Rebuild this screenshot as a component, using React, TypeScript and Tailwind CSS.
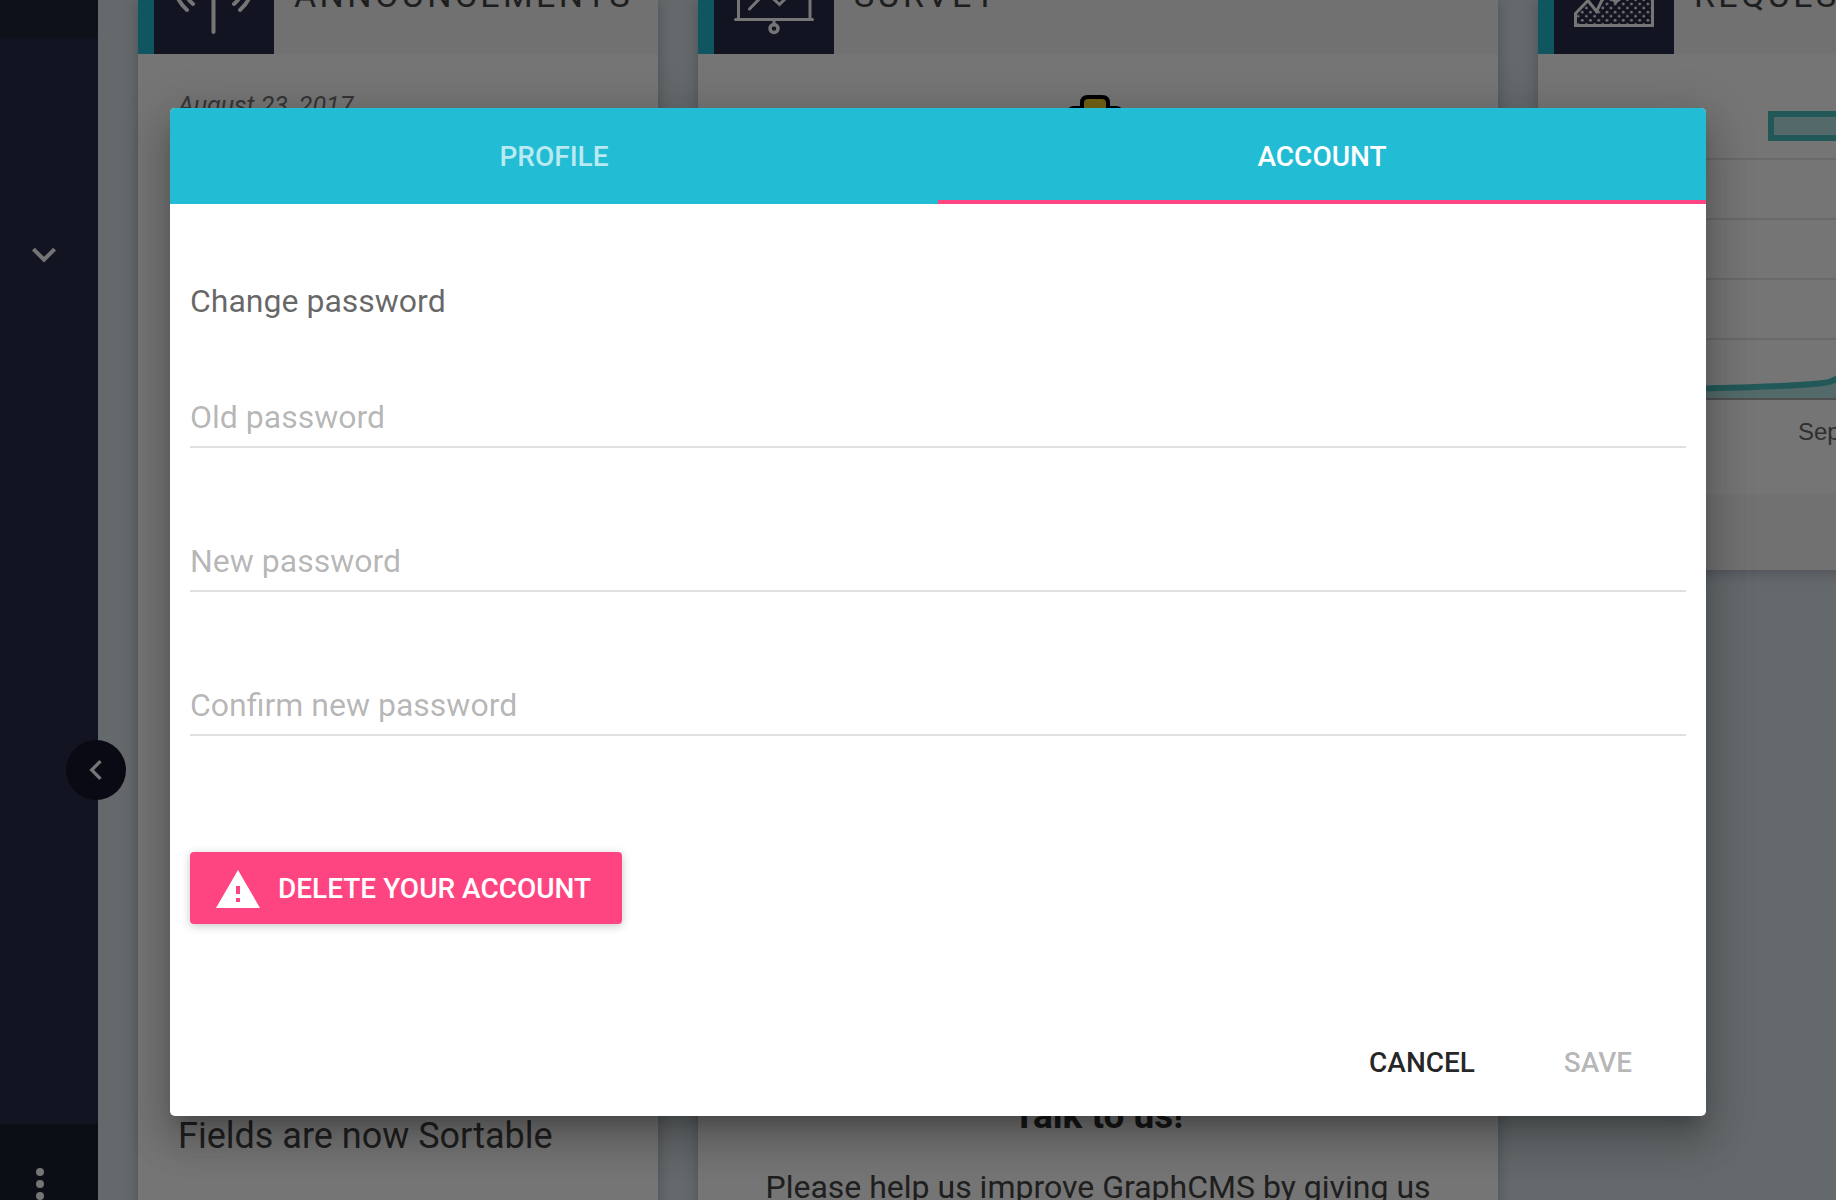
import type { ReactNode } from 'react';

function AntennaIcon() {
  return (
    <svg viewBox="0 0 120 120" className="size-[120px]" fill="none" stroke="#ffffff" strokeWidth="4" strokeLinecap="round" aria-hidden="true">
      <path d="M59.5 46v52" />
      <path d="M33 76a39.6 39.6 0 0 1 0-59" />
      <path d="M39 70a31.2 31.2 0 0 1 0-47" />
      <path d="M86 76a39.6 39.6 0 0 0 0-59" />
      <path d="M80 70a31.2 31.2 0 0 0 0-47" />
      <circle cx="59.5" cy="44" r="6" />
    </svg>
  );
}

function BoardIcon() {
  return (
    <svg viewBox="0 0 120 120" className="size-[120px]" fill="none" stroke="#ffffff" strokeWidth="3" strokeLinecap="round" aria-hidden="true">
      <path d="M24.5 30v55M96 30v55M21.5 85.5h77M60 87v4M21.5 30h77" />
      <path d="M35.5 75L52 58l13.500 12.500L85 51" />
      <circle cx="60" cy="94.5" r="4" strokeWidth="3.5" />
    </svg>
  );
}

function AreaIcon() {
  return (
    <svg viewBox="0 0 120 120" className="size-[120px]" aria-hidden="true">
      <defs>
        <pattern id="dots" x="18.1" y="76" width="8.2" height="8.2" patternUnits="userSpaceOnUse">
          <circle cx="2" cy="2" r="1.4" fill="#ffffff" />
          <circle cx="6.1" cy="6.1" r="1.4" fill="#ffffff" />
        </pattern>
      </defs>
      <path
        d="M21.5 79.5L34 66.500l8.500 11L51 60l11 8 34-30h2.500v53.500h-77z"
        fill="url(#dots)"
        stroke="#ffffff"
        strokeWidth="3"
      />
    </svg>
  );
}

type CardProps = { title: string; icon: ReactNode; width: string; children: ReactNode };

function Card({ title, icon, width, children }: CardProps) {
  return (
    <section className={`flex shrink-0 flex-col bg-white shadow-[0_2px_12px_rgba(40,50,80,0.3)] ${width}`}>
      <header className="flex h-[54px] items-end overflow-hidden bg-[#f6f6f6]">
        <div className="flex h-[120px] shrink-0 items-center">
          <div className="h-full w-4 bg-[#22bcd4]" />
          <div className="h-full bg-[#292d48]">{icon}</div>
          <h2 className="pt-0.5 pl-5 text-[34px] tracking-widest whitespace-nowrap text-[#444444]">{title}</h2>
        </div>
      </header>
      {children}
    </section>
  );
}

function Sidebar() {
  return (
    <aside className="relative z-10 flex w-[98px] shrink-0 flex-col bg-[#292d48]">
      <div className="h-[38px] bg-[#20233a]" />
      <nav className="flex flex-1 flex-col pt-[194px] pl-5">
        <button type="button" aria-label="Expand" className="size-12">
          <svg viewBox="0 0 24 24" className="size-12" fill="#ffffff" aria-hidden="true">
            <path d="M7.410 7.840L12 12.420l4.590-4.580L18 9.250l-6 6-6-6z" />
          </svg>
        </button>
      </nav>
      <div className="flex h-[76px] justify-start overflow-hidden bg-[#191f2d] pt-9 pl-1">
        <button type="button" aria-label="More" className="size-[72px]">
          <svg viewBox="0 0 36 36" className="size-[72px]" fill="#ffffff" aria-hidden="true">
            <circle cx="18" cy="6" r="2" />
            <circle cx="18" cy="12" r="2" />
            <circle cx="18" cy="18" r="2" />
          </svg>
        </button>
      </div>
      <button
        type="button"
        aria-label="Collapse sidebar"
        className="absolute top-[740px] -right-7 flex size-[60px] items-center justify-center rounded-full bg-[#15162a]"
      >
        <svg viewBox="0 0 24 24" className="size-10" fill="#ffffff" aria-hidden="true">
          <path d="M15.410 7.410L14 6l-6 6 6 6 1.410-1.410L10.830 12z" />
        </svg>
      </button>
    </aside>
  );
}

function RequestsChart() {
  return (
    <svg viewBox="0 0 800 346" className="h-[346px] w-[800px]" fill="none" aria-hidden="true">
      <g stroke="#e5e5e5" strokeWidth="2">
        <path d="M60 105h740M60 165h740M60 225h740M60 285h740" />
      </g>
      <path d="M60 336C140 335 245 334 285 329C296 328 302 323 312 314V346H60z" fill="#4bc0c0" fillOpacity="0.4" />
      <path d="M60 336C140 335 245 334 285 329C296 328 302 323 312 314" stroke="#4bc0c0" strokeWidth="6" />
      <path d="M60 345h740" stroke="#adadad" strokeWidth="2" />
      <rect x="233" y="60" width="74" height="24" fill="#b7e6e6" stroke="#4bc0c0" strokeWidth="6" />
    </svg>
  );
}

function Dashboard() {
  return (
    <div className="flex h-full">
      <Sidebar />
      <main className="flex min-w-0 flex-1 items-start gap-10 overflow-hidden bg-[#dae4e9] pl-10">
        <Card title="ANNOUNCEMENTS" width="w-[520px]" icon={<AntennaIcon />}>
          <div className="px-10 pt-10 pb-24">
            <p className="text-[25px] leading-6 text-[#757575] italic">August 23, 2017</p>
            <h3 className="mt-[996px] text-4xl leading-11 whitespace-nowrap text-[#444444]">Fields are now Sortable</h3>
          </div>
        </Card>
        <Card title="SURVEY" width="w-[800px]" icon={<BoardIcon />}>
          <div className="flex flex-col items-center pt-10 pb-24">
            <svg viewBox="0 0 120 120" className="size-[120px]" fill="#f7d331" stroke="#000000" strokeWidth="4" aria-hidden="true">
              <rect x="30" y="14" width="54" height="90" rx="6" />
              <path d="M44 19V9q0-6 6-6h14q6 0 6 6v10" />
            </svg>
            <h3 className="mt-[880px] text-[37px] leading-11 font-bold text-[#333333]">Talk to us!</h3>
            <p className="mt-[29px] text-[32px] leading-10 whitespace-nowrap text-[#444444]">
              Please help us improve GraphCMS by giving us
            </p>
          </div>
        </Card>
        <Card title="REQUESTS" width="w-[800px]" icon={<AreaIcon />}>
          <RequestsChart />
          <p className="h-[94px] pt-[18px] pl-[260px] font-['Liberation_Sans',sans-serif] text-2xl leading-7 text-[#666666]">Sep</p>
          <footer className="h-[76px] bg-[#f6f6f6]" />
        </Card>
      </main>
    </div>
  );
}

const fields = [
  { id: 'old-password', label: 'Old password' },
  { id: 'new-password', label: 'New password' },
  { id: 'confirm-password', label: 'Confirm new password' },
];

function AccountDialog() {
  return (
    <div
      role="dialog"
      aria-modal="true"
      aria-label="Account settings"
      className="w-full overflow-hidden rounded-[5px] bg-white"
    >
      <div role="tablist" className="grid h-24 grid-cols-2 bg-[#22bcd4] text-[28px] font-medium">
        <button type="button" role="tab" aria-selected="false" className="pt-0.5 text-white/70">
          PROFILE
        </button>
        <button type="button" role="tab" aria-selected="true" className="border-b-4 border-[#ff4581] pt-1.5 text-white">
          ACCOUNT
        </button>
      </div>
      <form className="flex flex-col items-start px-5 pt-[78px] pb-[18px]" onSubmit={(e) => e.preventDefault()}>
        <h1 className="text-[32px] leading-[38px] text-black/60">Change password</h1>
        <div className="mt-[68px] flex w-full flex-col gap-[84px]">
          {fields.map((f) => (
            <input
              key={f.id}
              id={f.id}
              type="password"
              aria-label={f.label}
              placeholder={f.label}
              className="h-[60px] w-full border-b-2 border-[#e0e0e0] text-[32px] text-black/85 outline-none placeholder:text-black/30"
            />
          ))}
        </div>
        <button
          type="button"
          className="mt-[116px] flex h-[72px] items-center rounded-[4px] bg-[#ff4581] pr-[31px] pl-6 text-[28px] font-medium text-white shadow-[0_2px_10px_rgba(0,0,0,0.22)]"
        >
          <svg viewBox="0 0 24 24" className="mt-1 mr-4 size-12" fill="currentColor" aria-hidden="true">
            <path d="M1 21h22L12 2 1 21zm12-3h-2v-2h2v2zm0-4h-2v-4h2v4z" />
          </svg>
          <span className="pt-0.5">DELETE YOUR ACCOUNT</span>
        </button>
        <div className="mt-[102px] flex self-end text-[28px] font-medium">
          <button type="button" className="h-[72px] min-w-44 px-8 pt-0.5 text-black/87">
            CANCEL
          </button>
          <button type="submit" disabled className="h-[72px] min-w-44 px-8 pt-0.5 text-black/30">
            SAVE
          </button>
        </div>
      </form>
    </div>
  );
}

export default function App() {
  return (
    <div className="relative h-screen overflow-hidden font-[Roboto,sans-serif]">
      <Dashboard />
      <div className="absolute inset-0 z-20 bg-black/54 pt-[108px] pr-[130px] pl-[170px]">
        <div className="rounded-[5px] shadow-[0_14px_16px_-8px_rgba(0,0,0,0.2),0_26px_38px_4px_rgba(0,0,0,0.14),0_10px_48px_8px_rgba(0,0,0,0.14)]">
          <AccountDialog />
        </div>
      </div>
    </div>
  );
}
